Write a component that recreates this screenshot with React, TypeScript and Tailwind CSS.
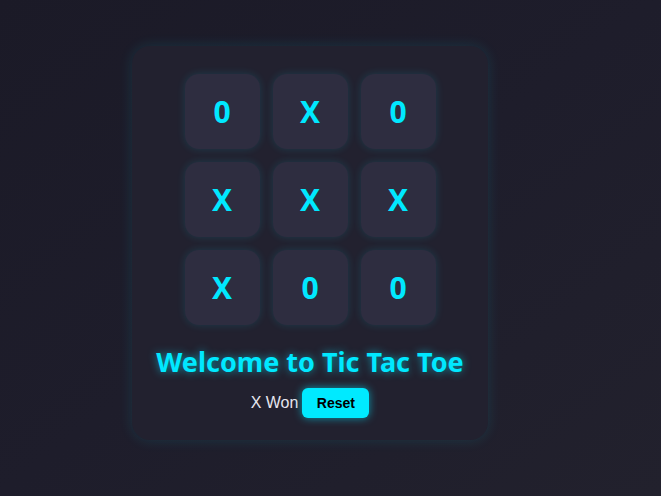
import * as React from "react"

const board = ["0", "X", "0", "X", "X", "X", "X", "0", "0"]

export default function App() {
  return (
    <div className="flex h-[496px] w-full bg-gradient-to-br from-[#1b1a27] via-[#1e1d2b] to-[#22212d] pl-[132px] pt-[46px]">
      {/* Card */}
      <div className="flex h-[394px] w-[356px] flex-col items-center rounded-[18px] bg-[#22212f] pt-[28px] shadow-[0_0_14px_rgba(0,229,255,0.12)]">
        <div className="grid grid-cols-[75px_75px_75px] gap-[13px]">
          {board.map((v, i) => (
            <button
              key={i}
              className="flex h-[75px] w-[75px] items-center justify-center rounded-[14px] bg-[#2e2d40] text-[30px] font-bold text-[#00e8ff] shadow-[0_0_8px_rgba(0,229,255,0.14)]"
              style={{ fontFamily: "'Noto Sans', 'DejaVu Sans', sans-serif" }}
            >
              {v}
            </button>
          ))}
        </div>

        <h1
          className="mt-[18px] text-[27px] font-bold leading-[38px] text-[#00e8ff] [text-shadow:0_0_8px_rgba(0,229,255,0.6)]"
          style={{ fontFamily: "'Noto Sans', sans-serif" }}
        >
          Welcome to Tic Tac Toe
        </h1>

        <div className="mt-[7px] flex items-center gap-[4px]" style={{ fontFamily: "'Liberation Sans', Arial, sans-serif" }}>
          <span className="text-[16px] text-[#e6e6ee]">X Won</span>
          <button className="h-[30px] w-[67px] rounded-[6px] bg-[#00eaff] text-[14px] font-semibold text-black shadow-[0_0_8px_rgba(0,229,255,0.6)]">
            Reset
          </button>
        </div>
      </div>
    </div>
  )
}
